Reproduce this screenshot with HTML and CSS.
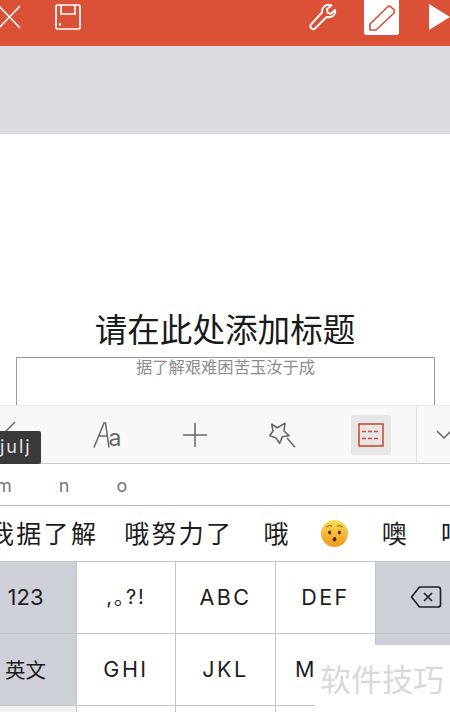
FILE: index.html
```html
<!DOCTYPE html>
<html lang="zh-CN">
<head>
  <meta charset="UTF-8">
  <title>请在此处添加标题</title>
  <meta name="viewport" content="width=device-width, initial-scale=1.0">
  <link rel="stylesheet" href="styles.css">
</head>
<body>
  <div class="screen">
    <header class="topbar">
      <div class="topbar-left">
        <svg class="icon-close" width="24" height="24" viewBox="0 0 24 24"><path d="M1 1 L22 23 M22 1 L1 23" fill="none" stroke="#fff" stroke-width="1.6"/></svg>
        <svg class="icon-save" width="26" height="26" viewBox="0 0 26 26" fill="none" stroke="#fff" stroke-width="1.7"><path d="M2.5 1 H23.5 Q25 1 25 2.5 V23.5 Q25 25 23.5 25 H2.5 Q1 25 1 23.5 V2.5 Q1 1 2.5 1 Z"/><path d="M6 1 V10 H20 V1"/><path d="M5 19 V22"/></svg>
      </div>
      <div class="topbar-right">
        <svg class="icon-wrench" width="28" height="28" viewBox="0 0 28 28" fill="none" stroke="#fff" stroke-width="1.9" stroke-linejoin="round"><path d="M26 7 L21.5 11 L18.5 9.5 L18 6 L22.5 2.5 C18 0.5 12.5 3.5 13 9.5 L2 21.5 C0 24 3.5 28 6 25.5 L17.5 14 C23 15 27 12 26 7 Z"/></svg>
        <span class="pencil-box">
          <svg width="30" height="30" viewBox="0 0 30 30" fill="none" stroke="#d9533a" stroke-width="1.7" stroke-linejoin="round"><path d="M3 27 L3 21 L21 3.5 Q22.5 2.5 24 4 L27 7 Q28 8.5 27 10 L9 27 Z"/></svg>
        </span>
        <svg class="icon-play" width="21" height="26" viewBox="0 0 21 26"><path d="M0 0 L21 13 L0 26 Z" fill="#fff"/></svg>
      </div>
    </header>

    <div class="gray-band"></div>

    <section class="slide">
      <h1 class="slide-title">请在此处添加标题</h1>
      <div class="slide-box">据了解艰难困苦玉汝于成</div>
    </section>

    <div class="toolbar">
      <div class="tool tool-back">
        <svg width="12" height="24" viewBox="0 0 12 24"><path d="M10 2 L1 11 L10 20" fill="none" stroke="#666" stroke-width="1.5"/></svg>
      </div>
      <div class="tool">
        <span class="aa"><svg width="17" height="26" viewBox="0 0 17 26"><path d="M1 25.5 L11 1 H12.5 L16 25.5 M5.5 14 H15" fill="none" stroke="#666" stroke-width="1.5"/></svg><span class="aa-small">a</span></span>
      </div>
      <div class="tool">
        <svg width="26" height="26" viewBox="0 0 26 26"><path d="M13 1 V25 M1 13 H25" fill="none" stroke="#666" stroke-width="1.5"/></svg>
      </div>
      <div class="tool">
        <svg width="28" height="28" viewBox="0 0 28 28"><path d="M2.7 3.3 L8.3 6.7 L16 2.3 L15 10 L20 14.7 L13.3 15.7 L10.7 22.3 L6.7 16.7 L0.7 14.7 L4 10 Z M18 17 L26 26.3" fill="none" stroke="#666" stroke-width="1.6" stroke-linejoin="round"/></svg>
      </div>
      <div class="tool">
        <span class="tool-active">
          <svg width="26" height="24" viewBox="0 0 26 24" fill="none" stroke="#cf4b35" stroke-width="1.6"><rect x="1" y="1" width="24" height="22"/><path d="M4 8.5 H22 M4 15.5 H22" stroke-dasharray="4 2"/></svg>
        </span>
      </div>
      <div class="tool-hide">
        <svg width="16" height="10" viewBox="0 0 16 10"><path d="M1 1 L8 8 L15 1" fill="none" stroke="#666" stroke-width="1.5"/></svg>
      </div>
      <span class="tip">julj</span>
    </div>

    <div class="pinyin-row">
      <span>m</span>
      <span>n</span>
      <span>o</span>
    </div>

    <div class="candidates">
      <span class="cand-first">我据了解</span>
      <span>哦努力了</span>
      <span>哦</span>
      <svg class="emoji" width="27" height="27" viewBox="0 0 28 28">
        <defs><linearGradient id="face" x1="0" y1="0" x2="0" y2="1"><stop offset="0" stop-color="#fbdc55"/><stop offset="1" stop-color="#f0981c"/></linearGradient></defs>
        <circle cx="14" cy="14" r="14" fill="url(#face)"/>
        <ellipse cx="9" cy="13" rx="1.5" ry="2" fill="#4a2c10"/>
        <ellipse cx="19" cy="13" rx="1.5" ry="2" fill="#4a2c10"/>
        <path d="M5.5 7.5 Q8.5 4.5 11.5 6.5 M16.5 6.5 Q19.5 4.5 22.5 7.5" fill="none" stroke="#8a5a14" stroke-width="1"/>
        <ellipse cx="14" cy="20" rx="1.9" ry="2.4" fill="#5a2412"/>
      </svg>
      <span>噢</span>
      <span class="cand-last">呕</span>
    </div>

    <div class="keyboard">
      <div class="key key-side">123</div>
      <div class="key key-punct">,<span class="punct-dot">。</span>?!</div>
      <div class="key">ABC</div>
      <div class="key">DEF</div>
      <div class="key key-side">
        <svg width="32" height="24" viewBox="0 0 32 24" fill="none" stroke="#222" stroke-width="1.7" stroke-linejoin="round"><path d="M9.5 2 H28 Q30.5 2 30.5 4.5 V19.5 Q30.5 22 28 22 H9.5 L1.5 12 Z"/><path d="M14 8 L22 16 M22 8 L14 16"/></svg>
      </div>
      <div class="key key-side key-cn">英文</div>
      <div class="key">GHI</div>
      <div class="key">JKL</div>
      <div class="key key-m">M</div>
      <div class="key key-side"></div>
      <div class="key key-side key-last"></div>
      <div class="key"></div>
      <div class="key"></div>
      <div class="key"></div>
      <div class="key"></div>
    </div>

    <div class="watermark">软件技巧</div>
  </div>
</body>
</html>
```

FILE: styles.css
```css
* {
  box-sizing: border-box;
}

body {
  margin: 0;
  font-family: Inter, "Noto Sans CJK SC", sans-serif;
  background: #fff;
}

.screen {
  position: relative;
  width: 450px;
  height: 712px;
  overflow: hidden;
}

/* top bar */
.topbar {
  height: 46px;
  background: #db5137;
  display: flex;
  justify-content: space-between;
  align-items: flex-start;
}

.topbar-left {
  display: flex;
  align-items: flex-start;
  margin-left: -2px;
}

.icon-close {
  margin-top: 5px;
}

.icon-save {
  margin: 4px 0 0 33px;
}

.topbar-right {
  display: flex;
  align-items: flex-start;
}

.icon-wrench {
  margin-top: 3px;
}

.pencil-box {
  width: 35px;
  height: 35px;
  margin-left: 27px;
  background: #fff;
  border-radius: 0 0 2px 2px;
  display: flex;
  align-items: center;
  justify-content: center;
}

.icon-play {
  margin: 4px 0 0 30px;
  flex-shrink: 0;
}

.gray-band {
  height: 88px;
  background: #dcdde1;
}

/* slide */
.slide {
  height: 271px;
  background: #fff;
  padding: 173px 16px 0 16px;
  overflow: hidden;
}

.slide-title {
  margin: 0;
  height: 50px;
  font-size: 32.6px;
  font-weight: 400;
  line-height: 42px;
  text-align: center;
  color: #1a1a1a;
  font-family: "Noto Sans CJK SC", sans-serif;
}

.slide-box {
  width: 419px;
  height: 80px;
  border: 1px solid #999;
  font-size: 16.3px;
  line-height: 17px;
  text-align: center;
  color: #8c8c8c;
  font-family: "Noto Sans CJK SC", sans-serif;
}

/* ribbon toolbar */
.toolbar {
  position: relative;
  height: 59px;
  background: #f8f8f8;
  border-top: 1px solid #e9e9e9;
  border-bottom: 1px solid #c9c9c9;
  display: flex;
  align-items: center;
}

.tool {
  width: 88px;
  height: 100%;
  display: flex;
  align-items: center;
  justify-content: center;
  flex-shrink: 0;
}

.tool-back {
  width: 63px;
  justify-content: flex-start;
  padding: 0 0 6px 5px;
}

.aa {
  display: flex;
  align-items: flex-end;
}

.aa-small {
  font-size: 23px;
  line-height: 20px;
  color: #666;
  margin-left: -1px;
}

.tool-active {
  width: 40px;
  height: 40px;
  background: #e6e6e6;
  border-radius: 2px;
  display: flex;
  align-items: center;
  justify-content: center;
}

.tool-hide {
  height: 100%;
  flex: 1;
  margin-left: 1px;
  border-left: 1px solid #e4e4e4;
  display: flex;
  align-items: center;
  padding-left: 19px;
}

.tool-hide svg {
  flex-shrink: 0;
}

.tip {
  position: absolute;
  left: 0;
  top: 25px;
  width: 41px;
  height: 33px;
  padding-top: 6px;
  background: #3a3a3a;
  border-radius: 0 2px 2px 0;
  color: #e4e4e4;
  font-size: 18px;
  line-height: 20px;
  letter-spacing: 2px;
}

/* candidates */
.pinyin-row {
  height: 42px;
  padding-top: 2px;
  border-bottom: 1px solid #b8b8bd;
  display: flex;
  align-items: center;
  gap: 47px;
  margin-left: -4px;
  font-size: 18px;
  color: #777;
}

.candidates {
  height: 55px;
  padding-bottom: 4px;
  display: flex;
  align-items: center;
  gap: 30px;
  margin-left: -11px;
  font-size: 25px;
  letter-spacing: 2.3px;
  color: #1c1c1c;
  font-family: "Noto Sans CJK SC", sans-serif;
  white-space: nowrap;
}

.cand-first {
  margin-right: -4px;
}

.emoji {
  flex-shrink: 0;
  margin: 4px 4px 0 0;
}

.cand-last {
  margin-left: 2px;
}

/* keyboard, the side columns run past the edges of the window */
.keyboard {
  display: grid;
  grid-template-columns: 102px 99px 100px 100px 101px;
  grid-auto-rows: 72px;
  margin-left: -26px;
  width: 502px;
  background: #fff;
}

.key {
  display: flex;
  align-items: center;
  justify-content: center;
  padding-bottom: 2px;
  background: #fff;
  border-top: 1px solid #c6c6c8;
  border-left: 1px solid #c6c6c8;
  font-size: 21.5px;
  letter-spacing: 2.5px;
  color: #1c1c1c;
}

.key-side {
  background: #cdd0d7;
  letter-spacing: 0;
  font-size: 22px;
}

.key-last {
  background: #f1f1f3;
}

.key-punct {
  font-size: 20px;
  letter-spacing: 2px;
}

.punct-dot {
  font-family: "Noto Sans CJK SC", sans-serif;
  font-feature-settings: "halt";
}

.key-cn {
  font-size: 20.5px;
  font-family: "Noto Sans CJK SC", sans-serif;
}

.key-m {
  justify-content: flex-start;
  padding-left: 19px;
}

/* watermark covers the corner of the keyboard */
.watermark {
  position: absolute;
  right: 0;
  bottom: 0;
  width: 135px;
  height: 67px;
  padding: 11px 0 0 5px;
  background: #fff;
  color: #d9d9d9;
  font-size: 31px;
  line-height: 44px;
  font-family: "Noto Sans CJK SC", sans-serif;
  white-space: nowrap;
}
```
